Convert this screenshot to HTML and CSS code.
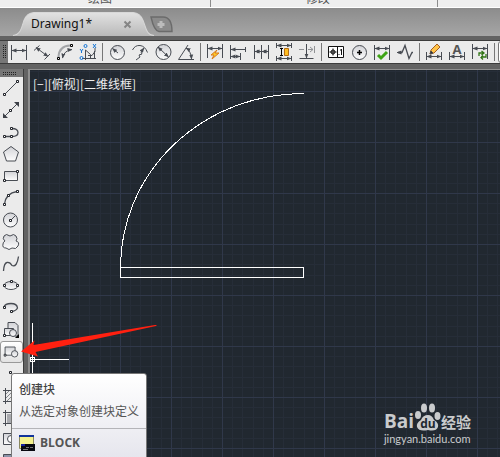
FILE: index.html
```html
<!DOCTYPE html>
<html lang="zh-CN">
<head>
<meta charset="utf-8">
<title>Drawing1</title>
<link rel="stylesheet" href="styles.css">
</head>
<body>
<svg class="defs" aria-hidden="true">
  <defs>
    <linearGradient id="tabfill" x1="0" y1="0" x2="0" y2="1"><stop offset="0" stop-color="#e2e2e2"/><stop offset="1" stop-color="#b9b9b9"/></linearGradient>
    <linearGradient id="shade" x1="0" y1="0" x2="0" y2="1"><stop offset="0" stop-color="#d2d3d7"/><stop offset="1" stop-color="#fdfdfd"/></linearGradient>
    <marker id="ar" viewBox="0 0 5 5" refX="4.5" refY="2.5" markerWidth="5" markerHeight="5" markerUnits="userSpaceOnUse" orient="auto-start-reverse"><path d="M0 .5L5 2.500L0 4.500z" fill="#484c53" stroke="none"/></marker>
  </defs>
</svg>
<div class="app">
  <header class="ribbon">
    <div class="panel"><span>绘图</span></div>
    <div class="panel"><span>修改</span></div>
    <div class="panel last"></div>
  </header>
  <nav class="tabs">
    <button class="tab" type="button">
      <svg class="tab-shape" viewBox="0 0 142 23" preserveAspectRatio="none"><path d="M0 23C8 22 9 14 11 8Q14 1 21 .5H121Q128 1 131 8C134 15 134 22 142 23z" fill="url(#tabfill)"/><path d="M0 22.5C8 22 9 14 11 8Q14 1 21 .5H121Q128 1 131 8C134 15 134 22 142 22.5" fill="none" stroke="#d8d8d8"/></svg>
      <span class="tab-name">Drawing1*</span>
      <svg class="close" viewBox="0 0 9 9"><path d="M1.500 1.500l6 6M7.500 1.500l-6 6" stroke="#858585" stroke-width="2"/></svg>
    </button>
    <button class="add" type="button" aria-label="新建">
      <svg viewBox="0 0 23 17"><path d="M1 1H13C19 1 22 6 22 15.500H9C5 15 3 10 1 1z" fill="#8b8b8b" stroke="#6b6b6b" stroke-width="1.400"/><path d="M11 5v7M7.500 8.500h7" stroke="#bcbcbc" stroke-width="3"/></svg>
    </button>
  </nav>
  <div class="toolbar">
    <i class="grip"></i>
    <button type="button" aria-label="线性"><svg viewBox="0 0 23 22"><path d="M3.500 4v15M18.500 4v15"/><path d="M4 9.500H18" marker-start="url(#ar)" marker-end="url(#ar)"/></svg></button>
    <button type="button" aria-label="对齐"><svg viewBox="0 0 23 22"><path d="M3 9.500L8.500 4.500M13.500 18.500L19 13"/><path d="M5 6.500L17 15.500" marker-start="url(#ar)" marker-end="url(#ar)"/></svg></button>
    <button type="button" aria-label="弧长"><svg viewBox="0 0 23 22"><path d="M4.500 16Q5 5 16 4.500" stroke="#a3a5a8" stroke-width="2"/><path d="M8.500 17Q10 9.500 18 8.500" marker-start="url(#ar)" marker-end="url(#ar)"/><path d="M3.500 16.500h2v2h-2zM16.500 3.500h2v2h-2z" stroke="#000" fill="#fff"/></svg></button>
    <button type="button" aria-label="坐标"><svg viewBox="0 0 23 22"><path d="M8.500 9v10M5 17.500H19M8.500 9L13.500 13.500V18M11 14.500h4l3-4V7M17.500 10v8"/><g class="blue"><circle cx="8.500" cy="5" r="1.500"/><circle cx="4.500" cy="17" r="1.500"/><path d="M16 3l3 4M19 3l-3 4M3 8l1.500 2L6 8M4.500 10v2"/></g></svg></button>
    <i class="sep"></i>
    <button type="button" aria-label="半径"><svg viewBox="0 0 23 22"><circle cx="11.500" cy="11.500" r="7" fill="url(#shade)"/><path d="M12 12L6.500 7.500" marker-end="url(#ar)"/></svg></button>
    <button type="button" aria-label="折弯"><svg viewBox="0 0 23 22"><path d="M3.500 9Q6 4 11 4.500T18.500 11.500"/><path d="M7 19l4-3-1-2 3-1-1-2 3-4" marker-end="url(#ar)"/></svg></button>
    <button type="button" aria-label="直径"><svg viewBox="0 0 23 22"><circle cx="11.500" cy="11" r="7.500" fill="url(#shade)"/><path d="M6 6L16.500 16" marker-start="url(#ar)" marker-end="url(#ar)"/></svg></button>
    <button type="button" aria-label="角度"><svg viewBox="0 0 23 22"><path d="M13 4L3.500 18.500H19"/><path d="M11 7Q16 10 16.500 18" marker-start="url(#ar)" marker-end="url(#ar)"/></svg></button>
    <i class="sep"></i>
    <button type="button" aria-label="快速标注"><svg viewBox="0 0 23 22"><path d="M3.500 3v14M18.500 3v14"/><path d="M4 7.500H18" marker-start="url(#ar)" marker-end="url(#ar)"/><path d="M13 9l-6 5h3l-2 4 7-6h-4z" fill="#ffc928" stroke="#d77a1c"/></svg></button>
    <button type="button" aria-label="基线"><svg viewBox="0 0 23 22"><path d="M3.500 4v14M13.500 12v7"/><path d="M4 8.500H18" marker-start="url(#ar)"/><path d="M18.500 6v5"/><path d="M4 15.500H13" marker-start="url(#ar)" marker-end="url(#ar)"/></svg></button>
    <button type="button" aria-label="连续"><svg viewBox="0 0 23 22"><path d="M4.500 4v14M11.500 4v14M18.500 4v14"/><path d="M5 10.500h6" marker-start="url(#ar)" marker-end="url(#ar)"/><path d="M12 10.500h6" marker-start="url(#ar)" marker-end="url(#ar)"/></svg></button>
    <button type="button" aria-label="间距"><svg viewBox="0 0 23 22"><path d="M3.500 2v5M18.500 2v5M3.500 15v5M18.500 15v5"/><path d="M4 4.500H18" marker-start="url(#ar)" marker-end="url(#ar)"/><path d="M4 17.500H18" marker-start="url(#ar)" marker-end="url(#ar)"/><path d="M8.500 7v8M7 7.500h3M7 14.500h3" stroke="#000"/><path d="M11.500 7.500h4v7h-4z" fill="#ffbd21" stroke="#b46c14"/></svg></button>
    <button type="button" aria-label="打断"><svg viewBox="0 0 23 22"><path d="M3 8.500h5M12 8.500h5M18.500 5v7M14 6l3 2.500-3 2.500" stroke="#909295"/><path d="M10.500 3v13M3.500 17.500h14"/><path d="M10.500 10v7" marker-end="url(#ar)"/></svg></button>
    <i class="sep"></i>
    <button type="button" aria-label="公差"><svg viewBox="0 0 23 22"><path d="M3.500 5.500h15v11h-15zM12.500 6v10" stroke="#111" fill="#fff"/><circle cx="8" cy="11" r="2" stroke="#111"/><path d="M4.500 11h7M8 7.500v7" stroke="#111"/><path d="M16.500 8v6M15 9h1.500M14 13v1" stroke="#111"/></svg></button>
    <button type="button" aria-label="圆心标记"><svg viewBox="0 0 23 22"><circle cx="11.500" cy="11.500" r="7" fill="url(#shade)"/><path d="M11.500 9v5M9 11.500h5" stroke="#000" stroke-width="1.500"/></svg></button>
    <button type="button" aria-label="检验"><svg viewBox="0 0 23 22"><path d="M3.500 4v15M18.500 4v15"/><path d="M4 7.500H18" marker-start="url(#ar)" marker-end="url(#ar)"/><path d="M7 14l3 3 6-6" stroke="#3da314" stroke-width="3"/></svg></button>
    <button type="button" aria-label="折弯线性"><svg viewBox="0 0 23 22"><path d="M4 11.500h4l3-7 4 13 3-6h1" stroke-width="1.300"/><path d="M7 11.500H3" marker-end="url(#ar)"/></svg></button>
    <i class="sep"></i>
    <button type="button" aria-label="编辑标注"><svg viewBox="0 0 23 22"><path d="M3.500 11v8M18.500 11v8"/><path d="M4 15.500H18" marker-start="url(#ar)" marker-end="url(#ar)"/><path d="M7 13l1-4 6-6 3 3-6 6z" fill="#ffc44a" stroke="#a65f20"/><path d="M7 13l1-3 2 2z" fill="#333"/></svg></button>
    <button type="button" aria-label="编辑文字"><svg viewBox="0 0 23 22"><path d="M3.500 11v8M18.500 11v8"/><path d="M4 15.500H18" marker-start="url(#ar)" marker-end="url(#ar)"/><text x="11" y="13" text-anchor="middle">A</text></svg></button>
    <button type="button" aria-label="更新"><svg viewBox="0 0 23 22"><path d="M3.500 3v15M18.500 3v15"/><path d="M4 7.500H18" marker-start="url(#ar)" marker-end="url(#ar)"/><path d="M10 15v-3h5M12.500 10l2.500 2-2.500 2M17 13v3h-5M14 14.500l-2 2 2 2" stroke="#317516" stroke-width="1.300"/></svg></button>
    <i class="sep"></i>
    <select class="style" aria-label="标注样式"><option></option></select>
  </div>
  <main class="work">
    <aside class="draw">
      <i class="handle"></i>
      <button type="button" aria-label="直线"><svg viewBox="0 0 22 22"><path d="M5 17L17 5"/><path class="node" d="M3.500 16.500h2v2h-2zM16.500 3.500h2v2h-2z"/></svg></button>
      <button type="button" aria-label="构造线"><svg viewBox="0 0 22 22"><path d="M5 17L17 5"/><path d="M3 19v-5l5 5zM19 3v5l-5-5z" fill="#3d4148" stroke="none"/><path class="node" d="M9.500 10.500h2v2h-2z"/></svg></button>
      <button type="button" aria-label="多段线"><svg viewBox="0 0 22 22"><path d="M4 15.500h8q6 0 6-4t-6-4" stroke-width="1.300"/><path class="node" d="M3.500 14.500h2v2h-2zM10.500 14.500h2v2h-2zM10.500 6.500h2v2h-2z"/></svg></button>
      <button type="button" aria-label="多边形"><svg viewBox="0 0 22 22"><path d="M11 3.500l7.500 5.500-3 9h-9L3.500 9z" fill="url(#shade)"/></svg></button>
      <button type="button" aria-label="矩形"><svg viewBox="0 0 22 22"><path d="M4.500 6.500h13v9h-13z" fill="url(#shade)"/><path class="node" d="M3.500 14.500h2v2h-2zM16.500 5.500h2v2h-2z"/></svg></button>
      <button type="button" aria-label="圆弧"><svg viewBox="0 0 22 22"><path d="M4.500 17Q6 6 17 4.500" stroke-width="1.300"/><path class="node" d="M3.500 16.500h2v2h-2zM7.500 7.500h2v2h-2zM16.500 3.500h2v2h-2z"/></svg></button>
      <button type="button" aria-label="圆"><svg viewBox="0 0 22 22"><circle cx="10.500" cy="11" r="7" fill="url(#shade)"/><path d="M11 11l4-4"/><path class="node" d="M9.500 10.500h2v2h-2z"/></svg></button>
      <button type="button" aria-label="修订云线"><svg viewBox="0 0 22 22"><path d="M5 10Q2 8 4 5t6 0q4-3 6 0t0 5q4 1 2 5t-6 2q-3 3-6 0-4 0-3-4 0-2 2-3z" fill="url(#shade)"/></svg></button>
      <button type="button" aria-label="样条曲线"><svg viewBox="0 0 22 22"><path d="M3.500 18Q4 10 7 9.500t5 3q5 2 6.500-9" stroke-width="1.300"/></svg></button>
      <button type="button" aria-label="椭圆"><svg viewBox="0 0 22 22"><ellipse cx="11" cy="10.500" rx="7" ry="4" fill="url(#shade)"/><path class="node" d="M3.500 9.500h2v2h-2zM10.500 5.500h2v2h-2zM16.500 9.500h2v2h-2z"/></svg></button>
      <button type="button" aria-label="椭圆弧"><svg viewBox="0 0 22 22"><path d="M4 10Q5 6.500 11 6.500T17.500 11Q16 14 11.500 14.500" fill="url(#shade)" stroke-width="1.300"/><path class="node" d="M3.500 9.500h2v2h-2zM10.500 13.500h2v2h-2z"/></svg></button>
      <button type="button" aria-label="插入块"><svg viewBox="0 0 22 22"><path d="M8 10V3.500h7l3 3V17h-5" fill="url(#shade)"/><path d="M4.500 9.500h9v7h-9z" fill="url(#shade)"/><circle cx="13" cy="14" r="3.500" fill="url(#shade)"/><path class="node" d="M3.500 15.500h2v2h-2z"/><path d="M19 15v4h-4z" fill="#000" stroke="none"/></svg></button>
      <button class="active" type="button" aria-label="创建块"><svg viewBox="0 0 22 22"><path d="M4.500 5.500h11v9h-11z" fill="url(#shade)"/><circle cx="15" cy="13" r="3.500" fill="url(#shade)"/><path class="node" d="M3.500 13.500h2v2h-2z"/></svg></button>
      <button type="button" aria-label="点"><svg viewBox="0 0 22 22"><path class="node" d="M9.500 8.500h2v2h-2z"/></svg></button>
      <button type="button" aria-label="图案填充"><svg viewBox="0 0 22 22"><path d="M5.500 3v16M3 5.500h16M3 16.500h16"/><path d="M6 9l3-3M6 13l7-7M7 16L17 6M11 16l6-6" stroke="#85888d"/></svg></button>
      <button type="button" aria-label="渐变色"><svg viewBox="0 0 22 22"><path d="M7 7h9v9H7z" fill="#a9aaae" stroke="none"/><path d="M5.500 3v16M3 5.500h16M3 16.500h16"/></svg></button>
      <button type="button" aria-label="面域"><svg viewBox="0 0 22 22"><path d="M3.500 4.500h15v11h-15z" fill="url(#shade)"/><circle cx="11" cy="10" r="3.500" fill="#fff"/></svg></button>
      <button type="button" aria-label="表格"><svg viewBox="0 0 22 22"><path d="M3.500 3.500h15v13h-15z" fill="#8b93a8"/></svg></button>
    </aside>
    <section class="canvas">
      <svg class="drawing" aria-hidden="true">
        <defs>
          <pattern id="grid" x="39" y="21" width="51" height="51" patternUnits="userSpaceOnUse">
            <path d="M10.500 0v51M20.500 0v51M31.500 0v51M41.500 0v51M0 10.500h51M0 20.500h51M0 31.500h51M0 41.500h51" stroke="#262d38"/>
            <path d="M.5 0v51M0 .5h51" stroke="#30384a"/>
          </pattern>
        </defs>
        <rect width="100%" height="100%" fill="url(#grid)"/>
        <g fill="none" stroke="#fff" shape-rendering="crispEdges">
          <path d="M90.500 197.500h183v10h-183z"/>
          <path d="M90.500 207.500V190Q96 150 110 128Q150 24 273.500 23.500" stroke="none"/>
          <path d="M90.500 197.500A183 174 0 0 1 273.500 23.500"/>
          <path d="M2.500 253v34M2.500 292v20M5 289.500h34M.5 287.500h4v4h-4zM.5 289.500h4M2.500 287v4"/>
        </g>
      </svg>
      <div class="view">[−][俯视][二维线框]</div>
      <div class="mark">
        <div class="brand"><span>Bai</span>
          <svg viewBox="0 0 27 29"><g fill="#c9cbcd"><ellipse cx="4" cy="12" rx="3" ry="4"/><ellipse cx="10" cy="5" rx="3" ry="4.500"/><ellipse cx="18" cy="5" rx="3" ry="4.500"/><ellipse cx="23.500" cy="13" rx="3" ry="4"/><path d="M14 12q4 0 6 5 5 3 4 7-2 5-10 3-9 2-11-3-1-4 4-7 2-5 7-5z"/></g><text x="14" y="25" text-anchor="middle">du</text></svg>
          <span class="cn">经验</span></div>
        <div class="url">jingyan.baidu.com</div>
      </div>
    </section>
  </main>
</div>
<svg class="pointer" viewBox="0 0 138 34" aria-hidden="true"><path d="M1 27.500L14.500 16.500L13.500 21L135 1Q138 .5 136 2L15.500 28L18 32.500z" fill="#ff2010"/></svg>
<div class="tip" role="tooltip">
  <div class="tip-body"><strong>创建块</strong><p>从选定对象创建块定义</p></div>
  <div class="tip-cmd">
    <svg viewBox="0 0 16 16"><path d="M.5.5h14v13H.5z" fill="#f5f28f" stroke="#8a8860"/><path d="M0 0h15v2H0z" fill="#12349b"/><path d="M2 9h14v7H2z" fill="#080810"/><path d="M2 9h4v2H2z" fill="#1722a0"/><path d="M7 12.500h3M11 12.500h3M4 14.500h5" stroke="#777"/></svg>
    <strong>BLOCK</strong>
  </div>
</div>
</body>
</html>
```
FILE: styles.css
```css
* { box-sizing: border-box; }
body {
  margin: 0;
  height: 100vh;
  overflow: hidden;
  background: #636363;
  font: 12px/16px "Open Sans", "Noto Sans CJK SC", sans-serif;
  color: #555;
}
button { border: 0; padding: 0; background: none; font: inherit; color: inherit; }
.defs { position: absolute; width: 0; height: 0; }
.app { display: flex; flex-direction: column; height: 100%; }

.ribbon {
  display: flex;
  height: 8px;
  flex: none;
  padding-left: 2px;
  overflow: hidden;
  background: #efefef;
  border-bottom: 1px solid #fff;
}
.panel {
  display: flex;
  flex: 195 1 0;
  align-items: flex-end;
  justify-content: center;
  padding: 0 12px 0 0;
  border-right: 1px solid #8c8c8c;
}
.panel + .panel { flex-grow: 213; }
.panel.last { flex-grow: 62; border: 0; padding: 0; }

.tabs {
  display: flex;
  flex: none;
  height: 28px;
  padding: 4px 0 0 13px;
  background: linear-gradient(#8c8c8c, #a6a6a6);
}
.tab {
  position: relative;
  display: flex;
  align-items: center;
  width: 141px;
  height: 24px;
  padding: 0 22px 0 18px;
  justify-content: space-between;
}
.tab-shape { position: absolute; inset: 0; width: 100%; height: 100%; }
.tab-name { position: relative; font-family: "Noto Sans", sans-serif; font-size: 12px; color: #111; }
.close { position: relative; width: 9px; height: 9px; }
.add { width: 23px; height: 17px; margin: 4px 0 0 -4px; position: relative; }
.add svg { display: block; width: 23px; height: 17px; }

.toolbar {
  display: flex;
  flex: none;
  height: 23px;
  margin-top: 4px;
  border-top: 1px solid #3c3c3c;
  background: #ebebeb;
  overflow: hidden;
}
.grip, .handle {
  flex: none;
  background:
    linear-gradient(90deg, #777 50%, transparent 0) 0 0 / 2px 2px content-box,
    linear-gradient(#777 50%, transparent 0) 0 0 / 2px 2px content-box,
    linear-gradient(#222, #222) content-box,
    #777;
}
.grip { width: 8px; padding: 3px 2px 5px 2px; }
.toolbar button { flex: none; width: 23px; height: 22px; }
.toolbar svg { width: 23px; height: 22px; }
.toolbar svg, .draw svg { display: block; fill: none; stroke: #484c53; }
.toolbar text { font: bold 13px "Open Sans", sans-serif; fill: #555; stroke: none; }
.toolbar .blue { stroke: #1474d4; }
.sep { flex: none; width: 6px; padding: 2px; }
.sep::before { content: ""; display: block; width: 1px; height: 18px; background: #777; }
.style { width: 120px; flex: none; border: 1px solid #777; border-radius: 3px; background: #fff; }

.work { display: flex; flex: 1; min-height: 0; padding-top: 5px; border-top: 1px solid #3c3c3c; }
.draw {
  display: flex;
  flex-direction: column;
  flex: none;
  width: 24px;
  overflow: hidden;
  background: #ebebeb;
  border-right: 1px solid #3c3c3c;
}
.handle { height: 8px; padding: 2px 7px 2px 2px; }
.draw button { flex: none; height: 22px; width: 23px; }
.draw svg { width: 22px; height: 22px; }
.node { fill: #fff; stroke: #22252b; }
.draw .active { border: 1px solid #999; border-radius: 3px; background: linear-gradient(#fff, #e2e2e2); }
.draw .active svg { height: 20px; width: 20px; }

.canvas {
  position: relative;
  flex: 1;
  margin-left: 4px;
  border-top: 1px solid #8f8f8f;
  border-left: 2px solid #8f8f8f;
  background: #212830;
  overflow: hidden;
}
.drawing { position: absolute; inset: 0; width: 100%; height: 100%; }
.view { position: relative; padding: 6px 3px; color: #eee; font-family: "Noto Sans CJK SC", sans-serif; }
.mark { position: absolute; right: 29px; bottom: 11px; color: #c9cbcd; }
.brand { display: flex; align-items: flex-end; height: 29px; font: bold 19px/22px "Open Sans", sans-serif; }
.brand svg { width: 27px; height: 29px; }
.brand text { font: bold 12px "Open Sans", sans-serif; fill: #212830; }
.brand .cn { font: bold 15px/20px "Noto Sans CJK SC", sans-serif; }
.url { font: 11px/14px Lato, sans-serif; }

.pointer { position: absolute; left: 20px; top: 324px; width: 138px; height: 34px; }
.tip {
  position: absolute;
  left: 11px;
  top: 373px;
  height: 92px;
  border: 1px solid #777;
  border-radius: 3px;
  background: linear-gradient(#fff, #e4e4ec);
  font-family: "Open Sans", "Noto Sans CJK SC", sans-serif;
}
.tip-body { padding: 8px 7px; border-bottom: 1px solid #b4b4b8; }
.tip-body strong { display: block; font-weight: 500; color: #444; }
.tip p { margin: 6px 0 0; }
.tip-cmd { display: flex; align-items: center; gap: 5px; padding: 6px 7px; }
.tip-cmd svg { width: 16px; height: 16px; }
```
